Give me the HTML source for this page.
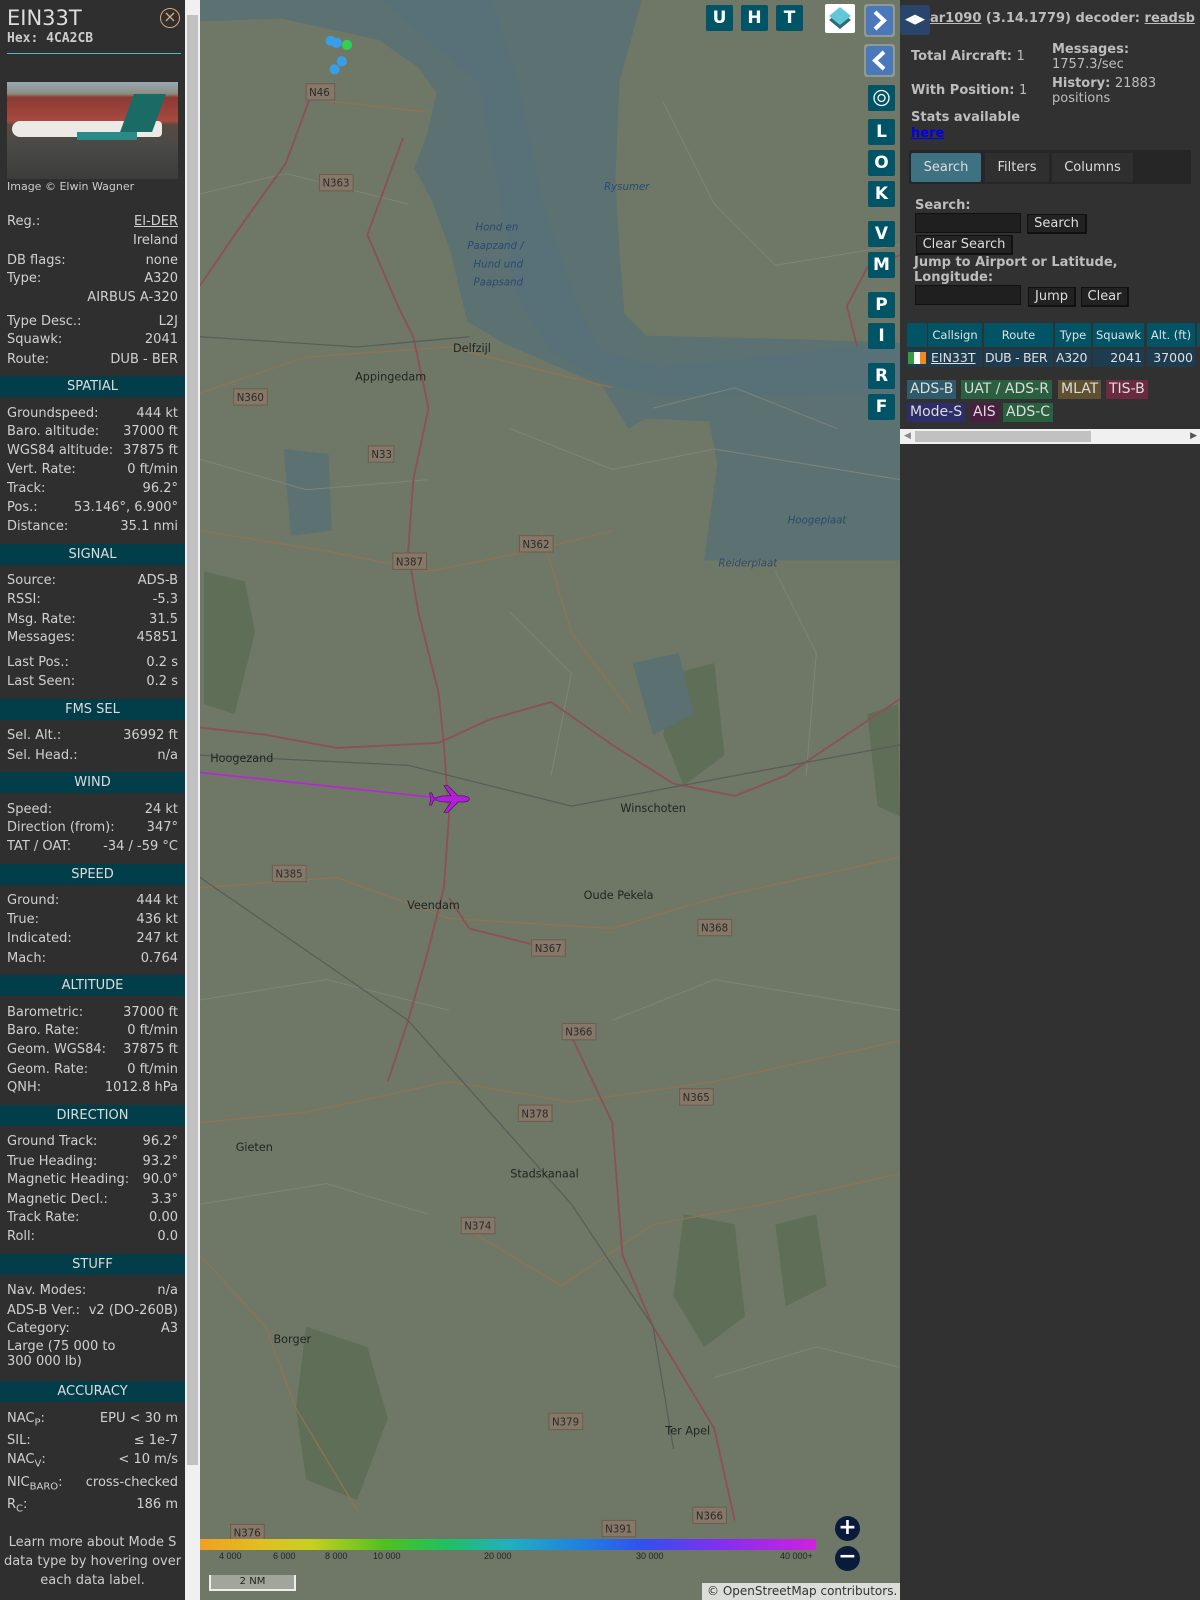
<!DOCTYPE html>
<html><head><meta charset="utf-8">
<style>
*{box-sizing:border-box;margin:0;padding:0}
body{width:1200px;height:1600px;overflow:hidden;background:#313131;font-family:"DejaVu Sans","Liberation Sans",sans-serif;font-size:13px;color:#d0d0d0;position:relative}
#left{position:absolute;left:0;top:0;width:185px;height:1600px;background:#2f2f2f}
.r{position:absolute;left:7px;right:7px;height:19px;line-height:19px;display:flex;justify-content:space-between;white-space:nowrap}
.h{position:absolute;left:0;width:185px;height:21px;line-height:21px;background:#023e4a;text-align:center;color:#dcdcdc}
#sb{position:absolute;left:185px;top:0;width:15px;height:1600px;background:#f0f0f0}
#sb .t{position:absolute;left:2px;top:15px;width:11px;height:1450px;background:#c1c1c1}
#map{position:absolute;left:200px;top:0;width:700px;height:1600px;background:#6f7766;overflow:hidden}
.mb{position:absolute;width:27px;height:26px;background:#005466;color:#fff;font-weight:bold;font-size:17px;text-align:center;line-height:26px;border-radius:2px}
#right{position:absolute;left:900px;top:0;width:300px;height:1600px;background:#313131}
.b{font-weight:bold;color:#bdbdbd}
.btn{position:absolute;background:#222;color:#ddd;border:1px solid #111;border-right:2px solid #111;border-bottom:2px solid #111;height:20px;line-height:18px;text-align:center;font-size:13px}
.inp{position:absolute;background:#1f1f1f;border:1px solid #111;height:20px}
.th{position:absolute;top:323px;height:24px;line-height:24px;background:#005466;color:#e0e0e0;font-size:11.5px;text-align:center}
.td{position:absolute;top:349px;height:18px;line-height:18px;background:#1e3c50;color:#e0e0e0;font-size:12.5px;white-space:nowrap;overflow:hidden}
.lg{position:absolute;height:19px;line-height:19px;font-size:14px;padding:0 3px;color:#ddd;white-space:nowrap}
</style></head><body>
<div id="left">
<div style="position:absolute;left:7px;top:6px;font-size:21px;color:#ddd">EIN33T</div>
<div style="position:absolute;left:7px;top:31px;font-family:'DejaVu Sans Mono',monospace;font-weight:bold;font-size:13px;color:#ccc">Hex: 4CA2CB</div>
<div style="position:absolute;left:160px;top:8px;width:20px;height:20px;border:1.5px solid #d9a673;border-radius:50%;color:#d9a673;text-align:center;line-height:16px;font-size:16px">×</div>
<div style="position:absolute;left:7px;top:53px;width:174px;height:1px;background:#4fb8c8"></div>
<div style="position:absolute;left:7px;top:82px;width:171px;height:97px;overflow:hidden;background:linear-gradient(180deg,#9aa8b4 0%,#8a8f80 12%,#8a3a34 16%,#a84a40 40%,#5a4a40 44%,#4a4a48 65%,#3c3c3a 100%)">
<div style="position:absolute;left:5px;top:39px;width:150px;height:16px;background:#eceae6;border-radius:8px 4px 4px 8px"></div>
<div style="position:absolute;left:120px;top:12px;width:32px;height:38px;background:#1a6a66;transform:skewX(-20deg)"></div>
<div style="position:absolute;left:70px;top:50px;width:60px;height:8px;background:#2a8a86"></div>
</div>
<div style="position:absolute;left:7px;top:180px;font-size:11px;color:#ccc">Image © Elwin Wagner</div>
<div class="r" style="top:212px"><span>Reg.:</span><span style="text-decoration:underline">EI-DER</span></div>
<div class="r" style="top:231px"><span></span><span>Ireland</span></div>
<div class="r" style="top:251px"><span>DB flags:</span><span>none</span></div>
<div class="r" style="top:269px"><span>Type:</span><span>A320</span></div>
<div class="r" style="top:288px"><span></span><span>AIRBUS A-320</span></div>
<div class="r" style="top:312px"><span>Type Desc.:</span><span>L2J</span></div>
<div class="r" style="top:330px"><span>Squawk:</span><span>2041</span></div>
<div class="r" style="top:350px"><span>Route:</span><span>DUB - BER</span></div>
<div class="h" style="top:376px">SPATIAL</div>
<div class="r" style="top:404px"><span>Groundspeed:</span><span>444 kt</span></div>
<div class="r" style="top:422px"><span>Baro. altitude:</span><span>37000 ft</span></div>
<div class="r" style="top:441px"><span>WGS84 altitude:</span><span>37875 ft</span></div>
<div class="r" style="top:460px"><span>Vert. Rate:</span><span>0 ft/min</span></div>
<div class="r" style="top:479px"><span>Track:</span><span>96.2°</span></div>
<div class="r" style="top:498px"><span>Pos.:</span><span>53.146°, 6.900°</span></div>
<div class="r" style="top:517px"><span>Distance:</span><span>35.1 nmi</span></div>
<div class="h" style="top:544px">SIGNAL</div>
<div class="r" style="top:571px"><span>Source:</span><span>ADS-B</span></div>
<div class="r" style="top:590px"><span>RSSI:</span><span>-5.3</span></div>
<div class="r" style="top:610px"><span>Msg. Rate:</span><span>31.5</span></div>
<div class="r" style="top:628px"><span>Messages:</span><span>45851</span></div>
<div class="r" style="top:653px"><span>Last Pos.:</span><span>0.2 s</span></div>
<div class="r" style="top:672px"><span>Last Seen:</span><span>0.2 s</span></div>
<div class="h" style="top:699px">FMS SEL</div>
<div class="r" style="top:726px"><span>Sel. Alt.:</span><span>36992 ft</span></div>
<div class="r" style="top:746px"><span>Sel. Head.:</span><span>n/a</span></div>
<div class="h" style="top:772px">WIND</div>
<div class="r" style="top:800px"><span>Speed:</span><span>24 kt</span></div>
<div class="r" style="top:818px"><span>Direction (from):</span><span>347°</span></div>
<div class="r" style="top:837px"><span>TAT / OAT:</span><span>-34 / -59 °C</span></div>
<div class="h" style="top:864px">SPEED</div>
<div class="r" style="top:891px"><span>Ground:</span><span>444 kt</span></div>
<div class="r" style="top:910px"><span>True:</span><span>436 kt</span></div>
<div class="r" style="top:929px"><span>Indicated:</span><span>247 kt</span></div>
<div class="r" style="top:949px"><span>Mach:</span><span>0.764</span></div>
<div class="h" style="top:975px">ALTITUDE</div>
<div class="r" style="top:1003px"><span>Barometric:</span><span>37000 ft</span></div>
<div class="r" style="top:1021px"><span>Baro. Rate:</span><span>0 ft/min</span></div>
<div class="r" style="top:1040px"><span>Geom. WGS84:</span><span>37875 ft</span></div>
<div class="r" style="top:1060px"><span>Geom. Rate:</span><span>0 ft/min</span></div>
<div class="r" style="top:1078px"><span>QNH:</span><span>1012.8 hPa</span></div>
<div class="h" style="top:1105px">DIRECTION</div>
<div class="r" style="top:1132px"><span>Ground Track:</span><span>96.2°</span></div>
<div class="r" style="top:1152px"><span>True Heading:</span><span>93.2°</span></div>
<div class="r" style="top:1170px"><span>Magnetic Heading:</span><span>90.0°</span></div>
<div class="r" style="top:1190px"><span>Magnetic Decl.:</span><span>3.3°</span></div>
<div class="r" style="top:1208px"><span>Track Rate:</span><span>0.00</span></div>
<div class="r" style="top:1227px"><span>Roll:</span><span>0.0</span></div>
<div class="h" style="top:1254px">STUFF</div>
<div class="r" style="top:1281px"><span>Nav. Modes:</span><span>n/a</span></div>
<div class="r" style="top:1301px"><span>ADS-B Ver.:</span><span>v2 (DO-260B)</span></div>
<div class="r" style="top:1319px"><span>Category:</span><span>A3</span></div>
<div style="position:absolute;left:7px;top:1339px;line-height:15px">Large (75 000 to<br>300 000 lb)</div>
<div class="h" style="top:1381px">ACCURACY</div>
<div class="r" style="top:1409px"><span>NAC<sub style="font-size:10px">P</sub>:</span><span>EPU &lt; 30 m</span></div>
<div class="r" style="top:1431px"><span>SIL:</span><span>≤ 1e-7</span></div>
<div class="r" style="top:1450px"><span>NAC<sub style="font-size:10px">V</sub>:</span><span>&lt; 10 m/s</span></div>
<div class="r" style="top:1473px"><span>NIC<sub style="font-size:10px">BARO</sub>:</span><span>cross-checked</span></div>
<div class="r" style="top:1495px"><span>R<sub style="font-size:10px">C</sub>:</span><span>186 m</span></div>
<div style="position:absolute;left:0;width:185px;top:1533px;text-align:center;line-height:19px;color:#ccc">Learn more about Mode S data type by hovering over each data label.</div>
</div>
<div id="sb"><div class="t"></div></div>

<div id="map">
<svg width="700" height="1600" viewBox="196 0 686 1568" preserveAspectRatio="none" style="position:absolute;left:0;top:0">
<rect x="196" y="0" width="686" height="1568" fill="#6f7766"/>
<g fill="#5f6e57">
<path d="M200,560 L240,570 L250,620 L230,700 L200,690Z"/>
<path d="M300,1300 L360,1320 L380,1390 L350,1470 L300,1450 L290,1380Z"/>
<path d="M670,1190 L720,1200 L730,1290 L690,1320 L660,1270Z"/>
<path d="M660,660 L700,650 L710,740 L670,770 L650,720Z"/>
<path d="M760,1200 L800,1190 L810,1260 L770,1280Z"/>
<path d="M850,700 L880,690 L882,800 L860,790Z"/>
</g>
<path d="M196,0 L629,0 L607,80 L603,175 L607,245 L612,308 L633,329 L764,332 L882,336 L882,549 L690,549 L703,455 L695,413 L633,410 L616,420 L590,378 L493,336 L458,315 L441,245 L423,196 L406,165 L419,130 L428,91 L410,66 L371,39 L275,18 L196,21Z" fill="#5b7172"/>
<path d="M374,0 L482,0 L507,78 L531,196 L567,301 L587,343 L645,360 L882,336 L882,385 L645,388 L599,376 L538,343 L505,287 L490,196 L470,82Z" fill="#587078"/>
<path d="M278,440 L322,445 L325,520 L285,525Z" fill="#5b7172"/>
<path d="M620,650 L665,640 L680,700 L640,720Z" fill="#5b7070"/>
<g fill="none" stroke="#7f8478" stroke-width="1">
<path d="M196,190 L280,170 L400,200"/><path d="M196,450 L300,480 L420,470"/><path d="M500,420 L600,460 L700,440 L882,470"/>
<path d="M196,980 L320,960 L440,990"/><path d="M600,1000 L700,960 L882,990"/><path d="M196,1180 L320,1160 L420,1190"/>
<path d="M700,1350 L800,1320 L882,1340"/><path d="M500,600 L560,660 L540,760"/><path d="M760,560 L800,640 L790,760"/>
<path d="M650,100 L700,200 L760,260 L882,240"/><path d="M640,400 L720,380 L820,420"/>
</g>
<g fill="none" stroke="#8f7355" stroke-width="1.3">
<path d="M196,385 L300,350 L440,340 L600,380"/>
<path d="M196,520 L320,540 L420,560 L520,540 L600,520"/>
<path d="M196,870 L330,860 L440,900 L600,910 L700,880 L882,840"/>
<path d="M196,1100 L300,1090 L440,1060 L560,1080 L700,1060 L882,1020"/>
<path d="M450,1200 L550,1260 L640,1200 L750,1180 L882,1150"/>
<path d="M196,1230 L260,1300 L290,1380 L350,1480"/>
<path d="M530,520 L560,620 L620,700"/>
<path d="M300,95 L330,100 L420,110"/>
</g>
<g fill="none" stroke="#8c5058" stroke-width="1.8">
<path d="M306,90 L280,160 L230,230 L196,280"/>
<path d="M395,135 L360,230 L390,300 L405,330 L420,400 L405,470 L400,540 L410,600 L430,680 L435,730 L440,800 L435,870 L420,930 L400,1000 L380,1060"/>
<path d="M440,880 L460,910 L520,925"/>
<path d="M196,713 L260,720 L330,733 L430,728 L480,705 L540,688 L600,730 L660,768 L720,780 L770,760 L882,685"/>
<path d="M555,1005 L600,1100 L610,1230 L640,1300 L700,1400 L720,1490"/>
<path d="M882,250 L850,262 L830,300 L840,340"/>
</g>
<g fill="none" stroke="#595c58" stroke-width="1.2">
<path d="M196,860 L400,1000 L560,1180 L640,1300 L660,1420"/>
<path d="M196,740 L400,750 L560,790 L882,730"/>
<path d="M196,330 L350,340 L460,330"/>
</g>
<path d="M196,757 L440,783" stroke="#c020e0" stroke-width="1.5"/>
<path d="M428,782 Q430,780 436,780 L442,780 L435,770 L439,770 L449,780 L455,780 Q460,781 460,783 Q460,785 455,786 L449,786 L439,796 L435,796 L442,786 L436,786 Q430,786 428,784 L425,784 L423,789 L421,789 L422,783 L421,777 L423,777 L425,782Z" fill="#b020d8" stroke="#300030" stroke-width="0.5"/>
<g fill="#3a9ee6"><circle cx="324" cy="40" r="5"/><circle cx="330" cy="42" r="5"/><circle cx="335" cy="60" r="5"/><circle cx="328" cy="68" r="5"/></g>
<circle cx="340" cy="44" r="5" fill="#30d050"/>
<g font-family="DejaVu Sans" font-size="11" fill="#1e2520">
<text x="348" y="373">Appingedam</text><text x="444" y="345">Delfzijl</text><text x="206" y="747">Hoogezand</text>
<text x="608" y="796">Winschoten</text><text x="399" y="891">Veendam</text><text x="572" y="881">Oude Pekela</text>
<text x="231" y="1128">Gieten</text><text x="500" y="1154">Stadskanaal</text><text x="268" y="1316">Borger</text><text x="652" y="1406">Ter Apel</text>
</g>
<g font-family="DejaVu Sans" font-size="10" font-style="italic" fill="#2a4a70">
<text x="466" y="226">Hond en</text><text x="458" y="244">Paapzand /</text><text x="464" y="262">Hund und</text><text x="464" y="280">Paapsand</text>
<text x="592" y="186">Rysumer</text><text x="704" y="555">Reiderplaat</text><text x="772" y="513">Hoogeplaat</text>
</g>
<g font-family="DejaVu Sans" font-size="10" fill="#2a2a2a">
<g><rect x="300" y="82" width="28" height="16" fill="#857868" stroke="#6e5c50"/><text x="303" y="94">N46</text></g>
<g><rect x="313" y="171" width="33" height="16" fill="#857868" stroke="#6e5c50"/><text x="316" y="183">N363</text></g>
<g><rect x="229" y="381" width="33" height="16" fill="#857868" stroke="#6e5c50"/><text x="232" y="393">N360</text></g>
<g><rect x="361" y="437" width="25" height="16" fill="#857868" stroke="#6e5c50"/><text x="364" y="449">N33</text></g>
<g><rect x="385" y="542" width="33" height="16" fill="#857868" stroke="#6e5c50"/><text x="388" y="554">N387</text></g>
<g><rect x="509" y="525" width="33" height="16" fill="#857868" stroke="#6e5c50"/><text x="512" y="537">N362</text></g>
<g><rect x="267" y="848" width="33" height="16" fill="#857868" stroke="#6e5c50"/><text x="270" y="860">N385</text></g>
<g><rect x="521" y="921" width="33" height="16" fill="#857868" stroke="#6e5c50"/><text x="524" y="933">N367</text></g>
<g><rect x="684" y="901" width="33" height="16" fill="#857868" stroke="#6e5c50"/><text x="687" y="913">N368</text></g>
<g><rect x="551" y="1003" width="33" height="16" fill="#857868" stroke="#6e5c50"/><text x="554" y="1015">N366</text></g>
<g><rect x="508" y="1083" width="33" height="16" fill="#857868" stroke="#6e5c50"/><text x="511" y="1095">N378</text></g>
<g><rect x="666" y="1067" width="33" height="16" fill="#857868" stroke="#6e5c50"/><text x="669" y="1079">N365</text></g>
<g><rect x="452" y="1193" width="33" height="16" fill="#857868" stroke="#6e5c50"/><text x="455" y="1205">N374</text></g>
<g><rect x="538" y="1385" width="33" height="16" fill="#857868" stroke="#6e5c50"/><text x="541" y="1397">N379</text></g>
<g><rect x="590" y="1490" width="33" height="16" fill="#857868" stroke="#6e5c50"/><text x="593" y="1502">N391</text></g>
<g><rect x="679" y="1477" width="33" height="16" fill="#857868" stroke="#6e5c50"/><text x="682" y="1489">N366</text></g>
<g><rect x="226" y="1494" width="33" height="16" fill="#857868" stroke="#6e5c50"/><text x="229" y="1506">N376</text></g>
</g>
</svg>
<div class="mb" style="left:506px;top:5px">U</div>
<div class="mb" style="left:541px;top:5px">H</div>
<div class="mb" style="left:576px;top:5px">T</div>
<div style="position:absolute;left:625px;top:4px;width:30px;height:29px;background:#fff;border-radius:2px"><svg width="30" height="29"><path d="M15,7 L26,16 L15,25 L4,16Z" fill="#2f6a76"/><path d="M15,3 L26,12 L15,21 L4,12Z" fill="#62c8d8"/></svg></div>
<div style="position:absolute;left:664px;top:4px;width:31px;height:33px;background:#8f9a90;border-radius:3px"><div style="position:absolute;left:2px;top:2px;width:27px;height:29px;background:#4a78b8;border-radius:3px"><svg width="27" height="29"><path d="M9,6 L18,14.5 L9,23" fill="none" stroke="#fff" stroke-width="4"/></svg></div></div>
<div style="position:absolute;left:664px;top:44px;width:31px;height:33px;background:#8f9a90;border-radius:3px"><div style="position:absolute;left:2px;top:2px;width:27px;height:29px;background:#4a78b8;border-radius:3px"><svg width="27" height="29"><path d="M18,6 L9,14.5 L18,23" fill="none" stroke="#fff" stroke-width="4"/></svg></div></div>
<div class="mb" style="left:668px;top:85px"><svg width="27" height="26"><circle cx="13.5" cy="13" r="3.5" fill="none" stroke="#fff" stroke-width="1.3"/><circle cx="13.5" cy="13" r="7.5" fill="none" stroke="#fff" stroke-width="1.3"/></svg></div>
<div class="mb" style="left:668px;top:119px">L</div>
<div class="mb" style="left:668px;top:150px">O</div>
<div class="mb" style="left:668px;top:181px">K</div>
<div class="mb" style="left:668px;top:221px">V</div>
<div class="mb" style="left:668px;top:252px">M</div>
<div class="mb" style="left:668px;top:292px">P</div>
<div class="mb" style="left:668px;top:323px">I</div>
<div class="mb" style="left:668px;top:363px">R</div>
<div class="mb" style="left:668px;top:394px">F</div>
<div style="position:absolute;left:0;top:1539px;width:616px;height:11px;background:linear-gradient(90deg,#f0a020 0%,#e0c020 10%,#c8d020 18%,#50c020 30%,#20c060 40%,#20b0c0 50%,#2080e0 62%,#3050f0 72%,#8030f0 84%,#d020e0 100%)"></div>
<div style="position:absolute;left:0;top:1551px;width:616px;font-size:9px;color:#222;font-family:'Liberation Sans',sans-serif">
<span style="position:absolute;left:19px">4 000</span><span style="position:absolute;left:73px">6 000</span><span style="position:absolute;left:125px">8 000</span><span style="position:absolute;left:173px">10 000</span><span style="position:absolute;left:284px">20 000</span><span style="position:absolute;left:436px">30 000</span><span style="position:absolute;left:580px">40 000+</span></div>
<div style="position:absolute;left:9px;top:1575px;width:87px;height:16px;border:2px solid #eee;border-top:none;background:rgba(255,255,255,.35);text-align:center;font-size:10px;line-height:14px;color:#222">2 NM</div>
<div style="position:absolute;left:635px;top:1516px;width:25px;height:25px;border-radius:50%;background:#0a1a3a;color:#fff;text-align:center;line-height:24px;font-size:22px;font-weight:bold">+</div>
<div style="position:absolute;left:635px;top:1546px;width:25px;height:25px;border-radius:50%;background:#0a1a3a;color:#fff;text-align:center;line-height:22px;font-size:22px;font-weight:bold">−</div>
<div style="position:absolute;left:502px;top:1583px;width:198px;height:17px;background:rgba(255,255,255,.75);font-size:12px;color:#333;padding-left:5px;line-height:17px">© OpenStreetMap contributors.</div>
</div>

<div id="right">
<div style="position:absolute;left:0;top:5px;width:30px;height:30px;background:#29466a;border-radius:3px;color:#fff;font-size:13px;text-align:center;line-height:30px">◀▶</div>
<div class="b" style="position:absolute;left:30px;top:11px;font-size:13px;white-space:nowrap"><u>ar1090</u> (3.14.1779) decoder: <u>readsb</u></div>
<div class="b" style="position:absolute;left:11px;top:49px">Total Aircraft: <span style="font-weight:normal">1</span></div>
<div class="b" style="position:absolute;left:11px;top:83px">With Position: <span style="font-weight:normal">1</span></div>
<div class="b" style="position:absolute;left:152px;top:42px;line-height:15px">Messages:<br><span style="font-weight:normal">1757.3/sec</span></div>
<div class="b" style="position:absolute;left:152px;top:76px;line-height:15px">History: <span style="font-weight:normal">21883<br>positions</span></div>
<div class="b" style="position:absolute;left:11px;top:110px;line-height:16px">Stats available<br><a style="color:#0000ee;text-decoration:underline">here</a></div>
<div style="position:absolute;left:9px;top:150px;width:282px;height:34px;background:#262626"></div>
<div style="position:absolute;left:11px;top:153px;width:70px;height:29px;background:#3e7282;color:#ddd;text-align:center;line-height:29px;border-radius:2px">Search</div>
<div style="position:absolute;left:85px;top:153px;width:64px;height:29px;background:#2f2f2f;color:#ddd;text-align:center;line-height:29px">Filters</div>
<div style="position:absolute;left:152px;top:153px;width:81px;height:29px;background:#2f2f2f;color:#ddd;text-align:center;line-height:29px">Columns</div>
<div class="b" style="position:absolute;left:15px;top:198px">Search:</div>
<div class="inp" style="left:15px;top:213px;width:106px"></div>
<div class="btn" style="left:127px;top:214px;width:60px">Search</div>
<div class="btn" style="left:16px;top:235px;width:97px">Clear Search</div>
<div class="b" style="position:absolute;left:14px;top:255px;line-height:15px">Jump to Airport or Latitude,<br>Longitude:</div>
<div class="inp" style="left:15px;top:285px;width:106px"></div>
<div class="btn" style="left:128px;top:287px;width:48px">Jump</div>
<div class="btn" style="left:181px;top:287px;width:48px">Clear</div>
<div class="th" style="left:7px;width:20px"></div>
<div class="th" style="left:28px;width:54px">Callsign</div>
<div class="th" style="left:84px;width:69px">Route</div>
<div class="th" style="left:155px;width:36px">Type</div>
<div class="th" style="left:193px;width:51px">Squawk</div>
<div class="th" style="left:247px;width:48px">Alt. (ft)</div>
<div class="th" style="left:297px;width:3px"></div>
<div class="td" style="left:7px;width:20px"><div style="position:absolute;left:1px;top:3px;width:18px;height:12px;background:linear-gradient(90deg,#3a9a40 33%,#fff 33%,#fff 66%,#f08a20 66%)"></div></div>
<div class="td" style="left:28px;width:54px;padding-left:3px;text-decoration:underline">EIN33T</div>
<div class="td" style="left:84px;width:69px;padding-left:1px;letter-spacing:-0.3px">DUB - BER</div>
<div class="td" style="left:155px;width:36px;padding-left:1px;letter-spacing:-0.3px">A320</div>
<div class="td" style="left:193px;width:51px;text-align:right;padding-right:2px">2041</div>
<div class="td" style="left:247px;width:48px;text-align:right;padding-right:2px">37000</div>
<div class="lg" style="left:7px;top:380px;background:#2e5a6a">ADS-B</div>
<div class="lg" style="left:61px;top:380px;background:#2a6040">UAT / ADS-R</div>
<div class="lg" style="left:158px;top:380px;background:#5e5030">MLAT</div>
<div class="lg" style="left:206px;top:380px;background:#6a2a40">TIS-B</div>
<div class="lg" style="left:7px;top:403px;background:#2d2d6a">Mode-S</div>
<div class="lg" style="left:70px;top:403px;background:#4a1e40">AIS</div>
<div class="lg" style="left:103px;top:403px;background:#2a6040">ADS-C</div>
<div style="position:absolute;left:0;top:429px;width:300px;height:15px;background:#f0f0f0"><div style="position:absolute;left:15px;top:2px;width:176px;height:11px;background:#c1c1c1"></div><div style="position:absolute;left:4px;top:2px;font-size:9px;color:#888">◀</div><div style="position:absolute;right:3px;top:2px;font-size:9px;color:#555">▶</div></div>
</div>
</body></html>
